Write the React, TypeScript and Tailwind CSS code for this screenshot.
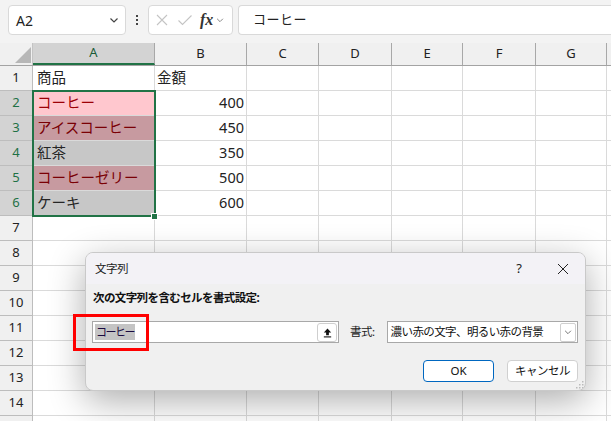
import React from "react";

const COLS = [
  { name: "A", w: 122 },
  { name: "B", w: 92 },
  { name: "C", w: 72 },
  { name: "D", w: 73 },
  { name: "E", w: 71 },
  { name: "F", w: 73 },
  { name: "G", w: 71 },
  { name: "", w: 40 },
];

type Cell = { text: string; bg?: string; color?: string };

const DATA: Record<number, [Cell, string]> = {
  1: [{ text: "商品" }, "金額"],
  2: [{ text: "コーヒー", bg: "#ffc7ce", color: "#9c0006" }, "400"],
  3: [{ text: "アイスコーヒー", bg: "#c79aa0", color: "#7a0005" }, "450"],
  4: [{ text: "紅茶", bg: "#c7c7c7", color: "#262626" }, "350"],
  5: [{ text: "コーヒーゼリー", bg: "#c79aa0", color: "#7a0005" }, "500"],
  6: [{ text: "ケーキ", bg: "#c7c7c7", color: "#262626" }, "600"],
};

function Chevron({ className }: { className?: string }) {
  return (
    <svg viewBox="0 0 12 12" className={className} fill="none" stroke="currentColor" strokeWidth="1.2">
      <path d="M2.5 4.5 6 8l3.5-3.5" />
    </svg>
  );
}

function TopBar() {
  return (
    <div className="flex h-[43px] items-start gap-[5px] bg-[#f3f3f3] pl-[8px] pt-[5px]">
      <div className="flex h-[30px] w-[118px] items-center justify-between rounded-[4px] border border-[#d9d9d9] bg-white pl-[7px] pr-[5px]">
        <span className="text-[14px] text-[#222]">A2</span>
        <Chevron className="h-[12px] w-[12px] text-[#444]" />
      </div>
      <div className="flex h-[30px] w-[12px] flex-col items-center justify-center gap-[2px]">
        <span className="h-[2px] w-[2px] bg-[#444]" />
        <span className="h-[2px] w-[2px] bg-[#444]" />
        <span className="h-[2px] w-[2px] bg-[#444]" />
      </div>
      <div className="flex h-[30px] w-[85px] items-center rounded-[4px] border border-[#d9d9d9] bg-white pl-[6px]">
        <svg viewBox="0 0 14 14" className="h-[14px] w-[14px] text-[#c4c4c4]" fill="none" stroke="currentColor" strokeWidth="1.1">
          <path d="M2 2l10 10M12 2 2 12" />
        </svg>
        <svg viewBox="0 0 16 14" className="ml-[8px] h-[14px] w-[16px] text-[#c4c4c4]" fill="none" stroke="currentColor" strokeWidth="1.1">
          <path d="M1.5 7.5 5.5 11.5 14.5 2.5" />
        </svg>
        <span className="ml-[7px] font-['Liberation_Serif',serif] text-[16px] font-bold italic leading-none text-[#333]">fx</span>
        <Chevron className="ml-[2px] h-[10px] w-[10px] text-[#888]" />
      </div>
      <div className="flex h-[30px] flex-1 items-center rounded-l-[4px] border border-r-0 border-[#d9d9d9] bg-white pl-[14px]">
        <span className="text-[13px] tracking-[0.5px] text-[#222]">コーヒー</span>
      </div>
    </div>
  );
}

function Grid() {
  const rows = Array.from({ length: 15 }, (_, i) => i + 1);
  return (
    <div className="relative">
      <div className="flex h-[23px] border-b border-[#a3a3a3] bg-[#f0f0f0]">
        <div className="relative w-[33px] shrink-0 border-r border-[#c4c4c4]">
          <svg viewBox="0 0 16 16" className="absolute left-[15px] top-[4px] h-[16px] w-[16px]">
            <path d="M16 0 16 16 0 16Z" fill="#b7b7b7" />
          </svg>
        </div>
        {COLS.map((c) => (
          <div
            key={c.name + c.w}
            style={{ width: c.w }}
            className={
              c.name === "A"
                ? "flex shrink-0 items-center justify-center border-b-2 border-r border-b-[#217346] border-r-[#a8a8a8] bg-[#d3d3d3] text-[13px] text-[#1a5c38]"
                : "flex shrink-0 items-center justify-center border-r border-[#a8a8a8] text-[13px] text-[#222]"
            }
          >
            {c.name}
          </div>
        ))}
      </div>
      {rows.map((r) => {
        const sel = r >= 2 && r <= 6;
        const d = DATA[r];
        return (
          <div key={r} className="flex h-[25px]">
            <div
              className={
                sel
                  ? "flex w-[33px] shrink-0 items-center justify-center border-b border-r border-[#bdbdbd] bg-[#d3d3d3] text-[13px] text-[#1e7145]"
                  : "flex w-[33px] shrink-0 items-center justify-center border-b border-r border-[#bdbdbd] bg-[#f0f0f0] text-[13px] text-[#222]"
              }
            >
              {r <= 14 ? r : ""}
            </div>
            {COLS.map((c, ci) => {
              if (ci === 0 && d) {
                return (
                  <div
                    key={ci}
                    style={{ width: c.w, background: d[0].bg, color: d[0].color }}
                    className="flex shrink-0 items-center border-b border-r border-[#dadada] pl-[4px] text-[14.5px] text-[#222]"
                  >
                    {d[0].text}
                  </div>
                );
              }
              if (ci === 1 && d) {
                const num = r > 1;
                return (
                  <div
                    key={ci}
                    style={{ width: c.w }}
                    className={
                      num
                        ? "flex shrink-0 items-center justify-end border-b border-r border-[#dadada] pr-[2px] text-[14.5px] text-[#222]"
                        : "flex shrink-0 items-center border-b border-r border-[#dadada] pl-[2px] text-[14.5px] text-[#222]"
                    }
                  >
                    {d[1]}
                  </div>
                );
              }
              return <div key={ci} style={{ width: c.w }} className="shrink-0 border-b border-r border-[#dadada] bg-white" />;
            })}
          </div>
        );
      })}
      {/* selection A2:A6 */}
      <div className="pointer-events-none absolute left-[32px] top-[47px] h-[127px] w-[124px] border-2 border-[#217346]" />
      <div className="absolute left-[151px] top-[170px] h-[7px] w-[7px] border border-white bg-[#217346]" />
    </div>
  );
}

function Dialog() {
  return (
    <div className="absolute left-[85px] top-[252px] flex h-[139px] w-[501px] flex-col overflow-hidden rounded-[8px] border border-[#c9c9c9] bg-[#f0f0f0] shadow-[0_10px_36px_rgba(0,0,0,0.32)]">
      <div className="flex h-[31px] items-center bg-[#f3f2f6] pl-[9px] pr-[16px]">
        <span className="text-[11.5px] tracking-[-0.5px] text-[#222]">文字列</span>
        <span className="ml-auto mr-[35px] text-[13px] text-[#222]">?</span>
        <svg viewBox="0 0 12 12" className="h-[12px] w-[12px] text-[#222]" fill="none" stroke="currentColor" strokeWidth="1">
          <path d="M1 1l10 10M11 1 1 11" />
        </svg>
      </div>
      <div className="flex flex-1 flex-col px-[6px] pt-[6px]">
        <div className="pl-[1px] text-[11.5px] font-bold leading-[16px] tracking-[-0.6px] text-[#111]">次の文字列を含むセルを書式設定:</div>
        <div className="mt-[15px] flex h-[22px] items-center">
          <div className="flex h-[22px] w-[247px] items-center border border-[#a8a8a8] bg-white pl-[2px]">
            <span className="bg-[#c4c4c4] px-[1px] text-[11px] leading-[16px] tracking-[-1.5px] text-[#1a0a40]">コーヒー</span>
            <div className="ml-auto mr-[1px] flex h-[19px] w-[20px] items-center justify-center rounded-[3px] border border-[#cfcfcf] bg-white">
              <svg viewBox="0 0 12 12" className="h-[11px] w-[11px]">
                <path d="M6 1.5 10 6H7.5v3h-3V6H2Z" fill="#111" />
                <path d="M2 10.8h8" stroke="#111" strokeWidth="1.2" />
              </svg>
            </div>
          </div>
          <span className="ml-[11px] text-[11.5px] tracking-[-0.5px] text-[#222]">書式:</span>
          <div className="ml-[12px] flex h-[22px] w-[191px] items-center border border-[#a8a8a8] bg-white pl-[3px]">
            <span className="text-[11.5px] tracking-[-0.6px] text-[#111]">濃い赤の文字、明るい赤の背景</span>
            <div className="ml-auto mr-[1px] flex h-[19px] w-[16px] items-center justify-center rounded-[2px] border border-[#cfcfcf]">
              <Chevron className="h-[10px] w-[10px] text-[#777]" />
            </div>
          </div>
        </div>
        <div className="mt-[17px] flex justify-end gap-[13px] pr-[1px]">
          <button className="flex h-[22px] w-[71px] items-center justify-center rounded-[4px] border border-[#0067c0] bg-white text-[11.5px] text-[#111]">
            OK
          </button>
          <button className="flex h-[22px] w-[71px] items-center justify-center rounded-[4px] border border-[#d0d0d0] bg-white text-[11.5px] tracking-[-0.5px] text-[#111]">
            キャンセル
          </button>
        </div>
      </div>
      <svg viewBox="0 0 8 8" className="absolute bottom-[1px] right-[1px] h-[8px] w-[8px]">
        <rect x="6" y="0" width="1.5" height="1.5" fill="#bbb" />
        <rect x="3" y="3" width="1.5" height="1.5" fill="#bbb" />
        <rect x="6" y="3" width="1.5" height="1.5" fill="#bbb" />
        <rect x="0" y="6" width="1.5" height="1.5" fill="#bbb" />
        <rect x="3" y="6" width="1.5" height="1.5" fill="#bbb" />
        <rect x="6" y="6" width="1.5" height="1.5" fill="#bbb" />
      </svg>
    </div>
  );
}

export default function App() {
  return (
    <div className="relative h-[421px] w-[611px] overflow-hidden bg-white font-['Noto_Sans','Noto_Sans_CJK_JP',sans-serif]">
      <TopBar />
      <Grid />
      <Dialog />
      {/* highlight annotation */}
      <div className="absolute left-[73px] top-[314px] h-[37px] w-[76px] border-[3px] border-[#ff0000]" />
    </div>
  );
}
